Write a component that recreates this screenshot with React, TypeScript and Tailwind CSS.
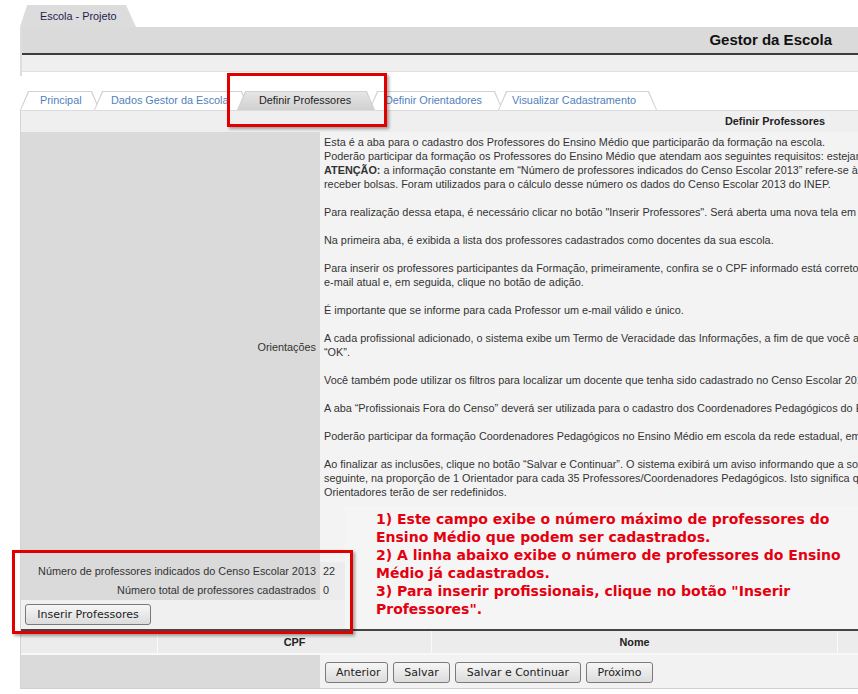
import React from "react";

const tabs = [
  { label: "Principal", w: "w-[80px]", ml: "ml-0", pl: "pl-[20px]", active: false },
  { label: "Dados Gestor da Escola", w: "w-[156px]", ml: "-ml-[6px]", pl: "pl-[17px]", active: false },
  { label: "Definir Professores", w: "w-[138px]", ml: "-ml-[13px]", pl: "pl-[22px]", active: true },
  { label: "Definir Orientadores", w: "w-[134px]", ml: "-ml-[6px]", pl: "pl-[16px]", active: false },
  { label: "Visualizar Cadastramento", w: "w-[159px]", ml: "-ml-[5px]", pl: "pl-[14px]", active: false },
];

const lines: (string | null)[] = [
  "Esta é a aba para o cadastro dos Professores do Ensino Médio que participarão da formação na escola.",
  "Poderão participar da formação os Professores do Ensino Médio que atendam aos seguintes requisitos: estejam atuando em sala de aula no Ensino Médio.",
  "ATENCAO",
  "receber bolsas. Foram utilizados para o cálculo desse número os dados do Censo Escolar 2013 do INEP.",
  null,
  "Para realização dessa etapa, é necessário clicar no botão \"Inserir Professores\". Será aberta uma nova tela em que constam duas abas.",
  null,
  "Na primeira aba, é exibida a lista dos professores cadastrados como docentes da sua escola.",
  null,
  "Para inserir os professores participantes da Formação, primeiramente, confira se o CPF informado está correto e, em seguida, informe o",
  "e-mail atual e, em seguida, clique no botão de adição.",
  null,
  "É importante que se informe para cada Professor um e-mail válido e único.",
  null,
  "A cada profissional adicionado, o sistema exibe um Termo de Veracidade das Informações, a fim de que você ateste a veracidade e clique em",
  "“OK”.",
  null,
  "Você também pode utilizar os filtros para localizar um docente que tenha sido cadastrado no Censo Escolar 2013.",
  null,
  "A aba “Profissionais Fora do Censo” deverá ser utilizada para o cadastro dos Coordenadores Pedagógicos do Ensino Médio.",
  null,
  "Poderão participar da formação Coordenadores Pedagógicos no Ensino Médio em escola da rede estadual, em exercício.",
  null,
  "Ao finalizar as inclusões, clique no botão “Salvar e Continuar”. O sistema exibirá um aviso informando que a sobra será calculada na aba",
  "seguinte, na proporção de 1 Orientador para cada 35 Professores/Coordenadores Pedagógicos. Isto significa que, se houver alteração, os",
  "Orientadores terão de ser redefinidos.",
];

const btn =
  "h-[21px] px-[10px] rounded-[3px] border border-[#7a7a7a] bg-gradient-to-b from-[#f6f6f6] to-[#dcdcdc] font-['DejaVu_Sans',Verdana,sans-serif] text-[11px] text-[#222] leading-none";

export default function App() {
  return (
    <div className="relative w-[858px] h-[694px] overflow-hidden bg-white font-['Liberation_Sans',Arial,sans-serif] text-[10.85px] text-[#333]">
      {/* top tab + title bar */}
      <div className="ml-[20px]">
        <div className="h-[27px] pt-[5px]">
          <div className="w-[116px] h-[22px] bg-[#dcdcdc] [clip-path:polygon(7px_0,106px_0,100%_100%,0_100%)] pl-[20px] flex items-center text-[#1c1c4e]">
            Escola - Projeto
          </div>
        </div>
        <div className="border-l-2 border-[#dedede]">
          <div className="h-[26px] bg-[#dadada] flex items-center justify-end pr-[26px] font-bold text-[15px] text-[#111]">
            Gestor da Escola
          </div>
          <div className="h-[2px] bg-[#3c3c3c]" />
          <div className="h-[17px] bg-[#efefef] border-b border-[#e0e0e0]" />
          <div className="h-[4px]" />
        </div>
      </div>

      {/* sub tabs */}
      <div className="mt-[15px] ml-[20px] flex items-end h-[19px]">
        {tabs.map((t) => (
          <div
            key={t.label}
            className={`relative h-[19px] ${t.w} ${t.ml} ${t.active ? "z-10" : ""}`}
          >
            <div className="absolute inset-0 bg-[#d2d2d2] [clip-path:polygon(8px_0,calc(100%_-_8px)_0,100%_100%,0_100%)]" />
            <div
              className={`absolute left-[1px] right-[1px] top-[1px] bottom-0 [clip-path:polygon(8px_0,calc(100%_-_8px)_0,100%_100%,0_100%)] ${
                t.active ? "bg-gradient-to-b from-[#e6e6e6] to-[#d0d0d0]" : "bg-white"
              }`}
            />
            <div
              className={`relative h-full flex items-center whitespace-nowrap ${t.pl} ${
                t.active ? "text-[#222]" : "text-[#4f7fbd]"
              }`}
            >
              {t.label}
            </div>
          </div>
        ))}
      </div>

      {/* main form */}
      <div className="ml-[20px] border-l border-[#d4d4d4]">
        <div className="h-[22px] bg-[#efefef] border-t border-[#dcdcdc] flex items-center justify-end pr-[33px] font-bold text-[#222]">
          Definir Professores
        </div>

        <div className="flex">
          <div className="w-[299px] bg-[#dadada] flex items-center justify-end pr-[4px]">Orientações</div>
          <div className="flex-1 bg-[#f3f3f3] pl-[4px] pt-[3px] pb-[63px] overflow-hidden leading-[14px]">
            {lines.map((l, i) =>
              l === null ? (
                <div key={i} className="h-[14px]" />
              ) : l === "ATENCAO" ? (
                <div key={i} className="whitespace-nowrap">
                  <b>ATENÇÃO:</b> a informação constante em “Número de professores indicados do Censo Escolar 2013” refere-se à quantidade máxima de professores que poderão
                </div>
              ) : (
                <div key={i} className="whitespace-nowrap">
                  {l}
                </div>
              )
            )}
          </div>
        </div>

        <div className="flex h-[19px]">
          <div className="w-[299px] bg-[#dadada] flex items-center justify-end pr-[4px]">
            Número de professores indicados do Censo Escolar 2013
          </div>
          <div className="flex-1 bg-[#ececec] flex items-center pl-[3px]">22</div>
        </div>
        <div className="flex h-[19px]">
          <div className="w-[299px] bg-[#dadada] flex items-center justify-end pr-[4px]">
            Número total de professores cadastrados
          </div>
          <div className="flex-1 bg-[#ececec] flex items-center pl-[3px]">0</div>
        </div>
        <div className="h-[29px] bg-[#f0f0f0] flex items-center pl-[4px]">
          <button className={`${btn} w-[126px] h-[19px]`}>Inserir Professores</button>
        </div>

        {/* table header */}
        <div className="border-t-2 border-[#444] flex h-[26px] bg-[#ececec] border-b-2 border-b-[#f8f8f8] font-bold text-[#222]">
          <div className="w-[137px] border-r border-[#fafafa]" />
          <div className="w-[274px] border-r border-[#fafafa] flex items-center justify-center">CPF</div>
          <div className="w-[406px] border-r border-[#fafafa] flex items-center justify-center">Nome</div>
          <div className="flex-1" />
        </div>

        {/* navigation buttons */}
        <div className="flex h-[34px] border-b border-[#d0d0d0]">
          <div className="w-[299px] bg-[#dadada]" />
          <div className="flex-1 bg-[#f2f2f2] flex items-center gap-[5px] pl-[5px] pt-[2px]">
            <button className={`${btn} w-[63px]`}>Anterior</button>
            <button className={`${btn} w-[57px]`}>Salvar</button>
            <button className={`${btn} w-[126px]`}>Salvar e Continuar</button>
            <button className={`${btn} w-[67px]`}>Próximo</button>
          </div>
        </div>
      </div>

      {/* annotation overlay */}
      <div className="absolute left-[345px] top-[506px] w-[513px] h-[123px] bg-[#f5f5f5] pl-[31px] pt-[4px] font-['DejaVu_Sans',Verdana,sans-serif] font-bold text-[14px] leading-[18px] text-[#e4000f] whitespace-nowrap">
        1) Este campo exibe o número máximo de professores do
        <br />
        Ensino Médio que podem ser cadastrados.
        <br />
        2) A linha abaixo exibe o número de professores do Ensino
        <br />
        Médio já cadastrados.
        <br />
        3) Para inserir profissionais, clique no botão "Inserir
        <br />
        Professores".
      </div>

      {/* red highlight boxes */}
      <div className="absolute left-[227px] top-[73px] w-[160px] h-[54px] border-[3px] border-[#e10000] shadow-[2px_2px_3px_rgba(0,0,0,0.35)]" />
      <div className="absolute left-[12px] top-[550px] w-[341px] h-[84px] border-[3px] border-[#e10000] shadow-[2px_2px_3px_rgba(0,0,0,0.35)]" />
    </div>
  );
}
